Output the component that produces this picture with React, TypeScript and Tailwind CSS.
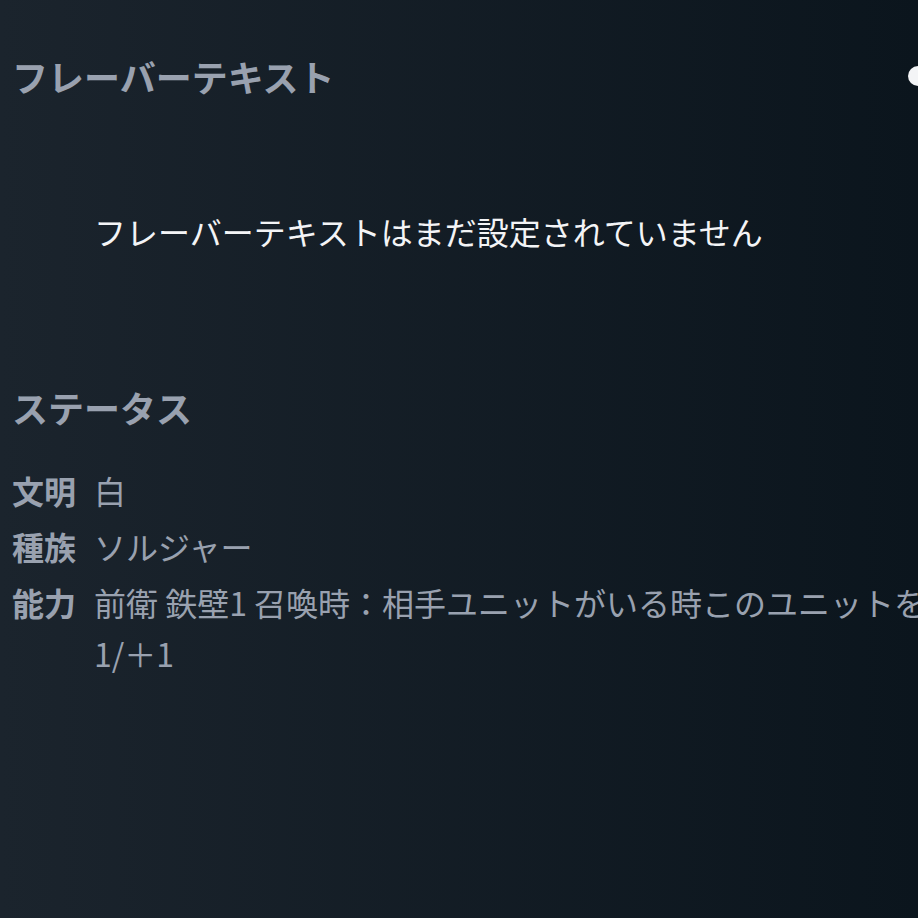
import React from "react";

const FONT = { fontFamily: '"Noto Sans CJK JP", "Noto Sans", sans-serif' };

const stats = [
  { label: "文明", value: "白" },
  { label: "種族", value: "ソルジャー" },
  { label: "能力", value: "前衛 鉄壁1 召喚時：相手ユニットがいる時このユニットを＋1/＋1" },
];

export default function App() {
  return (
    <div
      className="min-h-screen w-full overflow-hidden bg-gradient-to-r from-[#1b242d] to-[#0b151d]"
      style={FONT}
    >
      <div className="w-[970px] pl-[12px] pt-[56px]">
        {/* Flavor text */}
        <div className="flex items-center justify-between">
          <h2 className="text-[36px] font-bold leading-[40px] text-gray-400">フレーバーテキスト</h2>
          <span className="mr-[42px] h-5 w-5 rounded-full bg-gray-100" />
        </div>
        <p className="mt-[115px] pl-[82px] text-[32px] leading-[40px] text-gray-100">
          フレーバーテキストはまだ設定されていません
        </p>

        {/* Status */}
        <h2 className="mt-[136px] text-[36px] font-bold leading-[40px] text-gray-400">ステータス</h2>
        <div className="mt-[38px] flex flex-col gap-[5px]">
          {stats.map((s) => (
            <div key={s.label} className="flex gap-[18px] text-[32px] leading-[51px] text-gray-400">
              <span className="shrink-0 font-bold">{s.label}</span>
              <span className="break-all">{s.value}</span>
            </div>
          ))}
        </div>
      </div>
    </div>
  );
}
